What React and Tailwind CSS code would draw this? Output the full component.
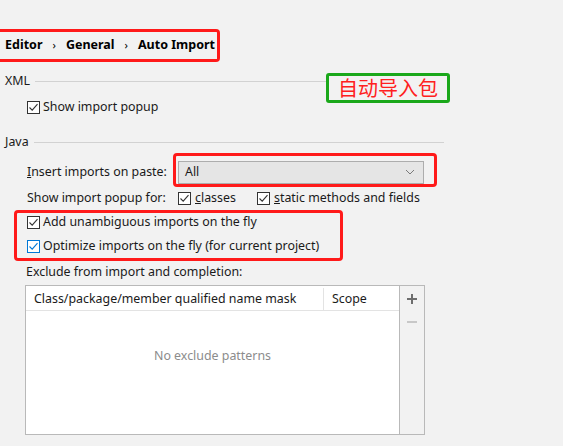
import React from 'react';

const font = { fontFamily: '"Noto Sans", "Noto Sans CJK SC", sans-serif' };

function Check({ blue }) {
    return (
        <span className={`w-[13px] h-[13px] border flex items-center justify-center bg-white shrink-0 ${blue ? 'border-[#0078d7]' : 'border-[#333333]'}`}>
            <svg width="11" height="11" viewBox="0 0 11 11">
                <path d="M1.5 5.5 L4.2 8.2 L9.5 2.2" fill="none" stroke={blue ? '#0078d7' : '#333333'} strokeWidth="1.1" />
            </svg>
        </span>
    );
}

function Section({ title }) {
    return (
        <div className="h-[22px] flex items-center pl-[5px]">
            <span className="text-[12.4px] text-[#1a1a1a] mr-[5px]">{title}</span>
            <div className="h-px bg-[#d2d2d2] w-[410px]" />
        </div>
    );
}

export default function App() {
    return (
        <div className="relative w-[563px] h-[446px] bg-[#f2f2f2] overflow-hidden text-[#1a1a1a] text-[12.4px]" style={font}>
            <div className="pt-[29px]">
                {/* breadcrumb */}
                <div className="h-[33px] w-[220px] border-[3px] border-l-0 border-[#ff1a1a] rounded-r-[4px] flex items-center pl-[5px] text-[12.5px] font-bold text-black whitespace-nowrap">
                    <span>Editor</span>
                    <span className="mx-[10px] font-normal text-[11px]">›</span>
                    <span>General</span>
                    <span className="mx-[10px] font-normal text-[11px]">›</span>
                    <span>Auto Import</span>
                </div>

                <div className="mt-[8px]">
                    <Section title="XML" />
                </div>
                <div className="mt-[4px] h-[22px] flex items-center pl-[27px] gap-[3px]">
                    <Check />
                    <span>Show import popup</span>
                </div>

                <div className="mt-[13px]">
                    <Section title="Java" />
                </div>

                <div className="mt-[7px] h-[24px] flex items-center pl-[27px]">
                    <span className="w-[151px]"><span className="underline">I</span>nsert imports on paste:</span>
                    <div className="w-[246px] h-[23px] bg-[#e5e5e5] border border-[#adadad] flex items-center justify-between pl-[6px] pr-[8px]">
                        <span>All</span>
                        <svg width="10" height="6" viewBox="0 0 10 6">
                            <path d="M1 1 L5 5 L9 1" fill="none" stroke="#7a7a7a" strokeWidth="1" />
                        </svg>
                    </div>
                </div>

                <div className="mt-[3px] h-[22px] flex items-center pl-[27px]">
                    <span className="w-[151px]">Show import popup for:</span>
                    <Check />
                    <span className="ml-[4px] w-[62px]"><span className="underline">c</span>lasses</span>
                    <Check />
                    <span className="ml-[4px]"><span className="underline">s</span>tatic methods and fields</span>
                </div>

                <div className="mt-[2px] h-[22px] flex items-center pl-[27px] gap-[3px]">
                    <Check />
                    <span>Add unambiguous imports on the fly</span>
                </div>
                <div className="mt-[2px] h-[22px] flex items-center pl-[27px] gap-[3px]">
                    <Check blue />
                    <span>Optimize imports on the fly (for current project)</span>
                </div>

                <div className="mt-[4px] h-[22px] flex items-center pl-[26px]">
                    Exclude from import and completion:
                </div>

                {/* table */}
                <div className="mt-[2px] ml-[25px] w-[400px] h-[150px] flex border border-[#b9b9b9]">
                    <div className="w-[374px] bg-white flex flex-col border-r border-[#b9b9b9]">
                        <div className="h-[25px] flex items-center border-b border-[#e3e3e3] pt-[2px]">
                            <span className="w-[298px] pl-[8px] border-r border-[#e3e3e3] h-full flex items-center">Class/package/member qualified name mask</span>
                            <span className="pl-[8px]">Scope</span>
                        </div>
                        <div className="flex-1 flex items-center justify-center text-[#8c8c8c] pb-[33px]">
                            No exclude patterns
                        </div>
                    </div>
                    <div className="flex-1 flex flex-col items-center pt-[7px] gap-[11px]">
                        <svg width="12" height="12" viewBox="0 0 12 12">
                            <path d="M6 1 V11 M1 6 H11" stroke="#6e6e6e" strokeWidth="2" />
                        </svg>
                        <svg width="12" height="12" viewBox="0 0 12 12">
                            <path d="M1 6 H11" stroke="#c8c8c8" strokeWidth="2" />
                        </svg>
                    </div>
                </div>
            </div>

            {/* annotations */}
            <div className="absolute left-[326px] top-[73px] w-[124px] h-[30px] border-[3px] border-[#1aa81a] rounded-[3px] bg-[#f2f2f2] flex items-center justify-center text-[20px] text-[#ff2020] leading-none" style={{ fontFamily: '"Noto Sans CJK SC", sans-serif' }}>
                自动导入包
            </div>
            <div className="absolute left-[173px] top-[153px] w-[264px] h-[34px] border-[3px] border-[#ff1a1a] rounded-[4px]" />
            <div className="absolute left-[14px] top-[210px] w-[329px] h-[51px] border-[3px] border-[#ff1a1a] rounded-[4px]" />
        </div>
    );
}
